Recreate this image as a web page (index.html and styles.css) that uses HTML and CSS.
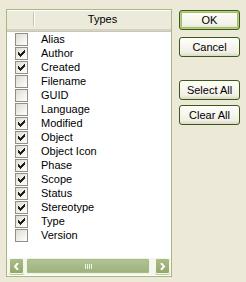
FILE: index.html
```html
<!DOCTYPE html>
<html lang="en">
<head>
    <meta charset="UTF-8">
    <title>Types</title>
    <link rel="stylesheet" href="styles.css">
</head>
<body>
    <div class="dialog">
        <div class="list">
            <div class="list-head">
                <div class="col-check"></div>
                <div class="col-name">Types</div>
            </div>
            <ul class="rows">
                <li><span class="box"></span>Alias</li>
                <li><span class="box"><svg class="tick" viewBox="0 0 7 7"><path d="M0 2h1v1h1v1h1v-1h1v-1h1v-1h1v-1h1v3h-1v1h-1v1h-1v1h-1v1h-1v-1h-1v-1h-1z"/></svg></span>Author</li>
                <li><span class="box"><svg class="tick" viewBox="0 0 7 7"><path d="M0 2h1v1h1v1h1v-1h1v-1h1v-1h1v-1h1v3h-1v1h-1v1h-1v1h-1v1h-1v-1h-1v-1h-1z"/></svg></span>Created</li>
                <li><span class="box"></span>Filename</li>
                <li><span class="box"></span>GUID</li>
                <li><span class="box"></span>Language</li>
                <li><span class="box"><svg class="tick" viewBox="0 0 7 7"><path d="M0 2h1v1h1v1h1v-1h1v-1h1v-1h1v-1h1v3h-1v1h-1v1h-1v1h-1v1h-1v-1h-1v-1h-1z"/></svg></span>Modified</li>
                <li><span class="box"><svg class="tick" viewBox="0 0 7 7"><path d="M0 2h1v1h1v1h1v-1h1v-1h1v-1h1v-1h1v3h-1v1h-1v1h-1v1h-1v1h-1v-1h-1v-1h-1z"/></svg></span>Object</li>
                <li><span class="box"><svg class="tick" viewBox="0 0 7 7"><path d="M0 2h1v1h1v1h1v-1h1v-1h1v-1h1v-1h1v3h-1v1h-1v1h-1v1h-1v1h-1v-1h-1v-1h-1z"/></svg></span>Object Icon</li>
                <li><span class="box"><svg class="tick" viewBox="0 0 7 7"><path d="M0 2h1v1h1v1h1v-1h1v-1h1v-1h1v-1h1v3h-1v1h-1v1h-1v1h-1v1h-1v-1h-1v-1h-1z"/></svg></span>Phase</li>
                <li><span class="box"><svg class="tick" viewBox="0 0 7 7"><path d="M0 2h1v1h1v1h1v-1h1v-1h1v-1h1v-1h1v3h-1v1h-1v1h-1v1h-1v1h-1v-1h-1v-1h-1z"/></svg></span>Scope</li>
                <li><span class="box"><svg class="tick" viewBox="0 0 7 7"><path d="M0 2h1v1h1v1h1v-1h1v-1h1v-1h1v-1h1v3h-1v1h-1v1h-1v1h-1v1h-1v-1h-1v-1h-1z"/></svg></span>Status</li>
                <li><span class="box"><svg class="tick" viewBox="0 0 7 7"><path d="M0 2h1v1h1v1h1v-1h1v-1h1v-1h1v-1h1v3h-1v1h-1v1h-1v1h-1v1h-1v-1h-1v-1h-1z"/></svg></span>Stereotype</li>
                <li><span class="box"><svg class="tick" viewBox="0 0 7 7"><path d="M0 2h1v1h1v1h1v-1h1v-1h1v-1h1v-1h1v3h-1v1h-1v1h-1v1h-1v1h-1v-1h-1v-1h-1z"/></svg></span>Type</li>
                <li><span class="box"></span>Version</li>
            </ul>
            <div class="hscroll">
                <div class="sb-btn">
                    <svg width="7" height="7" viewBox="0 0 7 7"><polyline points="5,0 2,3.5 5,7" fill="none" stroke="#fff" stroke-width="2"/></svg>
                </div>
                <div class="sb-track">
                    <div class="sb-thumb"><span class="grip"></span></div>
                </div>
                <div class="sb-btn">
                    <svg width="7" height="7" viewBox="0 0 7 7"><polyline points="2,0 5,3.5 2,7" fill="none" stroke="#fff" stroke-width="2"/></svg>
                </div>
            </div>
        </div>

        <div class="buttons">
            <button class="btn default">OK</button>
            <button class="btn">Cancel</button>
            <button class="btn spaced">Select All</button>
            <button class="btn tight">Clear All</button>
        </div>
    </div>
</body>
</html>
```

FILE: styles.css
```css
* {
    margin: 0;
    padding: 0;
    box-sizing: border-box;
    font-family: "Liberation Sans", Arial, sans-serif;
}

body {
    background-color: #ece9d8;
    color: black;
    font-size: 11px;
    width: 246px;
    height: 282px;
    overflow: hidden;
}

.dialog {
    display: flex;
    align-items: flex-start;
    padding: 9px 0 0 6px;
}

/* list view */
.list {
    width: 166px;
    height: 268px;
    border: 1px solid #a5b97f;
    background: white;
    display: flex;
    flex-direction: column;
}

.list-head {
    height: 21px;
    display: flex;
    background: #ebeadb;
    border-top: 1px solid white;
    border-bottom: 2px solid #d6d2c2;
    box-shadow: 0 1px 0 #cbc7b8;
}

.col-check {
    width: 27px;
    margin: 1px 0 3px 0;
    border-right: 1px solid #c7c5b2;
    box-shadow: 1px 0 0 white;
}

.col-name {
    flex: 1;
    text-align: center;
    line-height: 17px;
}

.rows {
    list-style: none;
    height: 227px;
    padding-top: 1px;
}

.rows li {
    height: 14px;
    display: flex;
    align-items: center;
    padding-left: 8px;
    line-height: 14px;
    white-space: nowrap;
}

.box {
    width: 13px;
    height: 13px;
    margin-right: 13px;
    border: 1px solid #8f8f85;
    background: linear-gradient(135deg, #dcdbd3, #f6f5f0 70%, white);
    display: flex;
    align-items: center;
    justify-content: center;
}

.tick {
    width: 7px;
    height: 7px;
    fill: #1f1f1f;
}

/* horizontal scroll bar */
.hscroll {
    height: 17px;
    display: flex;
    align-items: stretch;
    padding: 0 1px 1px 2px;
    background: #f7f6ee;
    gap: 2px;
}

.sb-btn {
    width: 15px;
    display: flex;
    align-items: center;
    justify-content: center;
    background: linear-gradient(#aabd87, #93a86c);
    border: 1px solid #f4f6ea;
    border-radius: 2px;
    box-shadow: 0 1px 0 #b8cc93;
}

.sb-track {
    flex: 1;
    display: flex;
    padding-right: 3px;
}

.sb-thumb {
    flex: 1;
    display: flex;
    align-items: center;
    justify-content: center;
    background: linear-gradient(#b2c495, #9db27a);
    border: 1px solid #f0f3e6;
    border-radius: 2px;
    box-shadow: inset 0 0 0 1px #a6b989;
}

.grip {
    width: 7px;
    height: 5px;
    background: repeating-linear-gradient(90deg, #eef2e4 0 1px, transparent 1px 2px);
}

/* dialog buttons */
.buttons {
    display: flex;
    flex-direction: column;
    margin-left: 7px;
    padding-top: 1px;
    gap: 7px;
}

.btn {
    width: 61px;
    height: 20px;
    font-size: 11px;
    color: black;
    background: linear-gradient(#fffffb, #f1efe5 80%, #dcd8c4);
    border: 1px solid #3a5a1a;
    border-radius: 3px;
}

.btn.default {
    box-shadow: inset 0 0 0 1px #b7cf84, inset 0 0 0 2px #a4be6c;
}

.btn.spaced {
    margin-top: 16px;
}

.btn.tight {
    margin-top: -2px;
}
```
